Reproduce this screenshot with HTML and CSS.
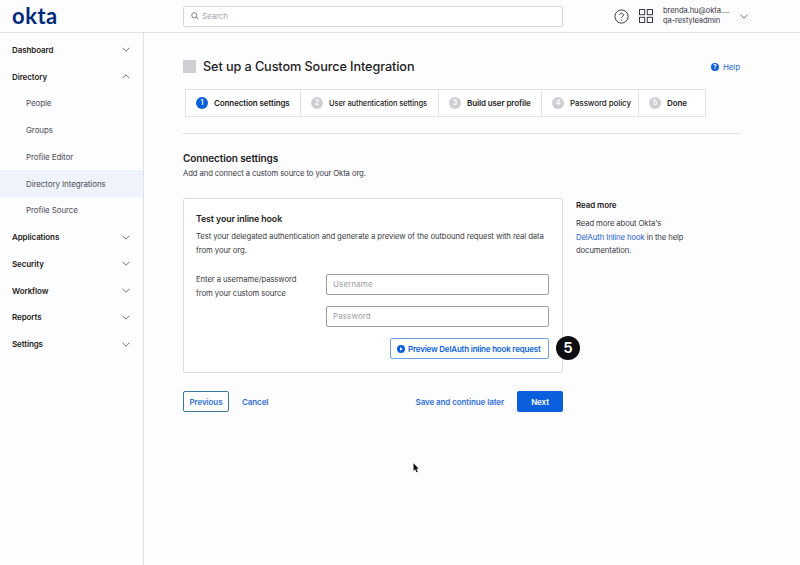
FILE: index.html
```html
<!DOCTYPE html>
<html lang="en">
<head>
    <meta charset="UTF-8">
    <meta name="viewport" content="width=device-width, initial-scale=1.0">
    <title>Set up a Custom Source Integration</title>
    <link rel="stylesheet" href="styles.css">
</head>
<body>
    <header class="topbar">
        <div class="logo">okta</div>
        <div class="search">
            <svg class="search-icon" width="8" height="8" viewBox="0 0 9 9"><circle cx="3.7" cy="3.7" r="2.9"/><path d="M5.9 5.9 8.4 8.4"/></svg>
            <span>Search</span>
        </div>
        <div class="top-right">
            <svg class="help-icon" width="15" height="15" viewBox="0 0 15 15">
                <circle cx="7.5" cy="7.5" r="6.6"/>
                <path d="M5.6 6a1.9 1.9 0 1 1 2.9 1.6c-.7.4-1 .8-1 1.5"/>
                <path d="M7.5 10.6v1"/>
            </svg>
            <svg class="apps-icon" width="14" height="14" viewBox="0 0 14 14">
                <rect x=".5" y=".5" width="5.2" height="5.2"/>
                <rect x="8.3" y=".5" width="5.2" height="5.2"/>
                <rect x=".5" y="8.3" width="5.2" height="5.2"/>
                <rect x="8.3" y="8.3" width="5.2" height="5.2"/>
            </svg>
            <div class="user">
                <div>brenda.hu@okta....</div>
                <div>qa-restyleadmin</div>
            </div>
            <svg class="chevron" width="8" height="5" viewBox="0 0 8 5"><path d="M.5.7 4 4.2 7.5.7"/></svg>
        </div>
    </header>

    <div class="layout">
        <nav class="sidebar">
            <div class="nav-item">Dashboard <svg class="chevron" width="8" height="5" viewBox="0 0 8 5"><path d="M.5.7 4 4.2 7.5.7"/></svg></div>
            <div class="nav-item">Directory <svg class="chevron" width="8" height="5" viewBox="0 0 8 5"><path d="M.5 4.3 4 .8 7.5 4.3"/></svg></div>
            <div class="nav-sub">People</div>
            <div class="nav-sub">Groups</div>
            <div class="nav-sub">Profile Editor</div>
            <div class="nav-sub active">Directory Integrations</div>
            <div class="nav-sub">Profile Source</div>
            <div class="nav-item">Applications <svg class="chevron" width="8" height="5" viewBox="0 0 8 5"><path d="M.5.7 4 4.2 7.5.7"/></svg></div>
            <div class="nav-item">Security <svg class="chevron" width="8" height="5" viewBox="0 0 8 5"><path d="M.5.7 4 4.2 7.5.7"/></svg></div>
            <div class="nav-item">Workflow <svg class="chevron" width="8" height="5" viewBox="0 0 8 5"><path d="M.5.7 4 4.2 7.5.7"/></svg></div>
            <div class="nav-item">Reports <svg class="chevron" width="8" height="5" viewBox="0 0 8 5"><path d="M.5.7 4 4.2 7.5.7"/></svg></div>
            <div class="nav-item">Settings <svg class="chevron" width="8" height="5" viewBox="0 0 8 5"><path d="M.5.7 4 4.2 7.5.7"/></svg></div>
        </nav>

        <main class="content">
            <div class="title-row">
                <div class="title-square"></div>
                <h1>Set up a Custom Source Integration</h1>
                <a class="help-link"><span class="help-dot">?</span>Help</a>
            </div>

            <ol class="stepper">
                <li class="step step-1 current"><span class="step-num">1</span>Connection settings</li>
                <li class="step step-2"><span class="step-num">2</span>User authentication settings</li>
                <li class="step step-3"><span class="step-num">3</span>Build user profile</li>
                <li class="step step-4"><span class="step-num">4</span>Password policy</li>
                <li class="step step-5"><span class="step-num">5</span>Done</li>
            </ol>

            <hr class="divider">

            <h2>Connection settings</h2>
            <p class="subtitle">Add and connect a custom source to your Okta org.</p>

            <div class="columns">
                <div class="form-col">
                    <section class="card">
                        <h3>Test your inline hook</h3>
                        <p class="card-text">Test your delegated authentication and generate a preview of the outbound request with real data from your org.</p>
                        <div class="fields">
                            <div class="field-label">Enter a username/password<br>from your custom source</div>
                            <div class="inputs">
                                <div class="input">Username</div>
                                <div class="input">Password</div>
                            </div>
                        </div>
                        <div class="preview-row">
                            <button class="btn-preview">
                                <svg class="play-icon" width="8" height="8" viewBox="0 0 8 8"><circle cx="4" cy="4" r="4" fill="#0b5fdc"/><path d="M3 2.3 5.8 4 3 5.7z" fill="#fff"/></svg>
                                Preview DelAuth inline hook request
                            </button>
                        </div>
                        <span class="badge">5</span>
                    </section>

                    <div class="actions">
                        <button class="btn-previous">Previous</button>
                        <a class="link cancel">Cancel</a>
                        <a class="link save">Save and continue later</a>
                        <button class="btn-next">Next</button>
                    </div>
                </div>

                <aside class="read-more">
                    <h4>Read more</h4>
                    <p>Read more about Okta's<br><a>DelAuth Inline hook</a> in the help<br>documentation.</p>
                </aside>
            </div>
        </main>
    </div>

    <!-- mouse pointer in the capture -->
    <svg class="cursor" width="7" height="10" viewBox="0 0 7 10"><path d="M.5.3v7.4l1.7-1.5 1.2 3 1.3-.5-1.2-2.9h2.2z" fill="#111"/></svg>
</body>
</html>
```

FILE: styles.css
```css
body {
    font-family: "Inter", "Liberation Sans", sans-serif;
    background-color: #fdfcfe;
    color: #1d1d21;
    margin: 0;
    height: 565px;
    overflow: hidden;
    font-size: 8px;
    letter-spacing: -0.1px;
}

h1, h2, h3, h4, p, ol {
    margin: 0;
    padding: 0;
}

svg {
    fill: none;
    stroke: #3a3a40;
    flex: none;
}

/* top bar */
.topbar {
    display: flex;
    align-items: center;
    height: 32px;
    border-bottom: 1px solid #e1e1e6;
    padding-left: 12px;
}

.logo {
    width: 171px;
    font-family: "Lato", sans-serif;
    font-weight: 700;
    font-size: 22px;
    letter-spacing: 0.5px;
    color: #00297a;
    line-height: 30px;
}

.search {
    display: flex;
    align-items: center;
    gap: 3px;
    box-sizing: border-box;
    width: 380px;
    height: 21px;
    padding-left: 7px;
    border: 1px solid #d8d8dc;
    border-radius: 2px;
    color: #a4a4aa;
    background-color: #fff;
}

.search-icon {
    stroke: #6e6e78;
}

.top-right {
    display: flex;
    align-items: center;
    margin-left: 51px;
}

.help-icon {
    margin-right: 10px;
    stroke-width: 1;
}

.apps-icon {
    margin-right: 10px;
}

.user {
    width: 77px;
    font-size: 7.6px;
    line-height: 10.5px;
    color: #3a3a40;
}

.chevron {
    stroke: #6e6e78;
}

/* sidebar */
.layout {
    display: flex;
    height: 532px;
}

.sidebar {
    box-sizing: border-box;
    width: 144px;
    padding-top: 3.5px;
    border-right: 1px solid #e1e1e6;
    flex: none;
}

.nav-item, .nav-sub {
    display: flex;
    align-items: center;
    justify-content: space-between;
    height: 26.75px;
    padding: 0 13px 0 12px;
}

.nav-item {
    font-weight: 600;
    color: #1d1d21;
}

.nav-sub {
    padding-left: 26px;
    color: #4e4e56;
}

.nav-sub.active {
    background-color: #eef3fc;
}

/* main */
.content {
    padding: 0 60px 0 39px;
    flex: 1;
}

.title-row {
    display: flex;
    align-items: center;
    height: 56px;
    padding-top: 11px;
    box-sizing: border-box;
    gap: 7px;
}

.title-square {
    width: 13px;
    height: 13px;
    background-color: #cfcfd3;
}

h1 {
    flex: 1;
    font-size: 12.7px;
    font-weight: 500;
}

.help-link {
    display: flex;
    align-items: center;
    gap: 4px;
    color: #2f6fd6;
}

.help-dot {
    width: 8px;
    height: 8px;
    border-radius: 50%;
    background-color: #0b5fdc;
    color: #fff;
    font-size: 6px;
    font-weight: 700;
    line-height: 8px;
    text-align: center;
}

.stepper {
    display: flex;
    list-style: none;
    box-sizing: border-box;
    width: 521px;
    height: 28px;
    margin-left: 2px;
    border: 1px solid #e1e1e6;
    background-color: #fff;
}

.step {
    display: flex;
    align-items: center;
    gap: 6px;
    box-sizing: border-box;
    padding-left: 10px;
    font-weight: 600;
    border-right: 1px solid #e1e1e6;
}

.step:last-child {
    border-right: none;
}

.step-1 { width: 115px; }
.step-2 { width: 138px; font-size: 7.5px; font-weight: 500; }
.step-3 { width: 103px; }
.step-4 { width: 97px; font-weight: 500; }
.step-5 { width: 66px; }

.step-num {
    width: 12px;
    height: 12px;
    border-radius: 50%;
    background-color: #cfcfd3;
    color: #fff;
    font-size: 7px;
    font-weight: 600;
    line-height: 12px;
    text-align: center;
    flex: none;
}

.current .step-num {
    background-color: #0b5fdc;
}

.divider {
    margin: 16px 0 0;
    border: none;
    border-top: 1px solid #e1e1e6;
}

h2 {
    margin-top: 18px;
    font-size: 10px;
    font-weight: 600;
    line-height: 12px;
}

.subtitle {
    margin-top: 4px;
    font-size: 7.7px;
    line-height: 12px;
    color: #3a3a40;
}

.columns {
    display: flex;
    margin-top: 18px;
    gap: 13px;
}

.form-col {
    width: 380px;
    flex: none;
}

.card {
    position: relative;
    box-sizing: border-box;
    height: 175px;
    padding: 14px 13px 0 12px;
    border: 1px solid #dcdce0;
    border-radius: 2px;
    background-color: #fff;
}

h3 {
    font-size: 8.8px;
    font-weight: 600;
    line-height: 12px;
}

.card-text {
    margin-top: 5px;
    font-size: 7.75px;
    line-height: 13.5px;
    color: #3a3a40;
}

.fields {
    display: flex;
    margin-top: 17px;
}

.field-label {
    width: 130px;
    margin-top: -1px;
    font-size: 7.75px;
    line-height: 13.5px;
    color: #3a3a40;
}

.inputs {
    display: flex;
    flex-direction: column;
    gap: 11px;
    flex: 1;
}

.input {
    box-sizing: border-box;
    height: 21px;
    padding-left: 6px;
    line-height: 19px;
    letter-spacing: 0.1px;
    border: 1px solid #9d9da3;
    border-radius: 2px;
    color: #9d9da3;
}

.preview-row {
    display: flex;
    justify-content: flex-end;
    margin-top: 11px;
}

button {
    font-family: inherit;
    font-size: 8px;
    font-weight: 600;
    letter-spacing: -0.1px;
    border-radius: 2px;
    padding: 0;
}

.btn-preview {
    display: flex;
    align-items: center;
    gap: 3px;
    box-sizing: border-box;
    width: 159px;
    height: 21px;
    padding-left: 6px;
    border: 1px solid #6ba4e8;
    background-color: #fff;
    color: #0b5fdc;
    letter-spacing: -0.2px;
    white-space: nowrap;
}

.play-icon {
    stroke: none;
}

.badge {
    position: absolute;
    left: 372px;
    top: 137px;
    width: 24px;
    height: 24px;
    border-radius: 50%;
    background-color: #0e0e12;
    color: #fff;
    font-size: 15px;
    font-weight: 600;
    line-height: 24px;
    text-align: center;
}

.actions {
    display: flex;
    align-items: center;
    margin-top: 18px;
}

.btn-previous {
    box-sizing: border-box;
    width: 46px;
    height: 21px;
    border: 1px solid #3c7a9c;
    background-color: #fff;
    color: #2f6fd6;
}

.link {
    color: #2f6fd6;
    font-weight: 600;
}

.cancel {
    margin-left: 13px;
}

.save {
    margin-left: auto;
    margin-right: 13px;
}

.btn-next {
    width: 46px;
    height: 21px;
    border: none;
    background-color: #0b5fdc;
    color: #fff;
}

.read-more h4 {
    margin-top: 1px;
    font-size: 8px;
    font-weight: 600;
    line-height: 12px;
}

.read-more p {
    margin-top: 6px;
    font-size: 7.7px;
    line-height: 13.5px;
    color: #3a3a40;
}

.read-more a {
    color: #1a62c9;
}

.cursor {
    position: absolute;
    left: 413px;
    top: 463px;
    stroke: none;
}
```
